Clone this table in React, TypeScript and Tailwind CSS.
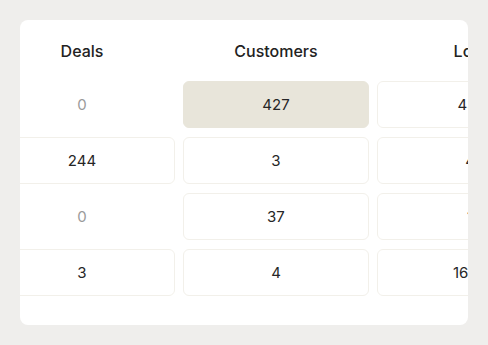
const columns = ["Deals", "Customers", "Lost"];

const rows: { value: string; muted?: boolean; active?: boolean }[][] = [
  [{ value: "0", muted: true }, { value: "427", active: true }, { value: "431" }],
  [{ value: "244" }, { value: "3" }, { value: "4" }],
  [{ value: "0", muted: true }, { value: "37" }, { value: "1" }],
  [{ value: "3" }, { value: "4" }, { value: "1620" }],
];

const Cell = ({ value, muted, active }: { value: string; muted?: boolean; active?: boolean }) => {
  let cls = "border border-[#f2f0ea] bg-white text-[#262626]";
  if (muted) cls = "border border-transparent text-[#9b9b9b]";
  if (active) cls = "border border-[#e8e5da] bg-[#e8e5da] text-[#262626]";
  return (
    <div className={`w-[186px] h-[47px] shrink-0 rounded-md flex items-center justify-center text-[15px] pt-px ${cls}`}>
      {value}
    </div>
  );
};

export default function App() {
  return (
    <div className="w-[488px] h-[345px] bg-[#efeeec] p-5 font-['Inter',sans-serif]">
      <div className="w-[448px] h-[305px] bg-white rounded-lg overflow-hidden pt-[21px]">
        <div className="-ml-[31px] flex flex-col">
          <div className="flex gap-2 mb-5">
            {columns.map((c) => (
              <div key={c} className="w-[186px] shrink-0 h-5 leading-5 text-center text-base font-medium text-[#222]">
                {c}
              </div>
            ))}
          </div>
          <div className="flex flex-col gap-[9px]">
            {rows.map((r, i) => (
              <div key={i} className="flex gap-2">
                {r.map((cell, j) => (
                  <Cell key={j} {...cell} />
                ))}
              </div>
            ))}
          </div>
        </div>
      </div>
    </div>
  );
}
